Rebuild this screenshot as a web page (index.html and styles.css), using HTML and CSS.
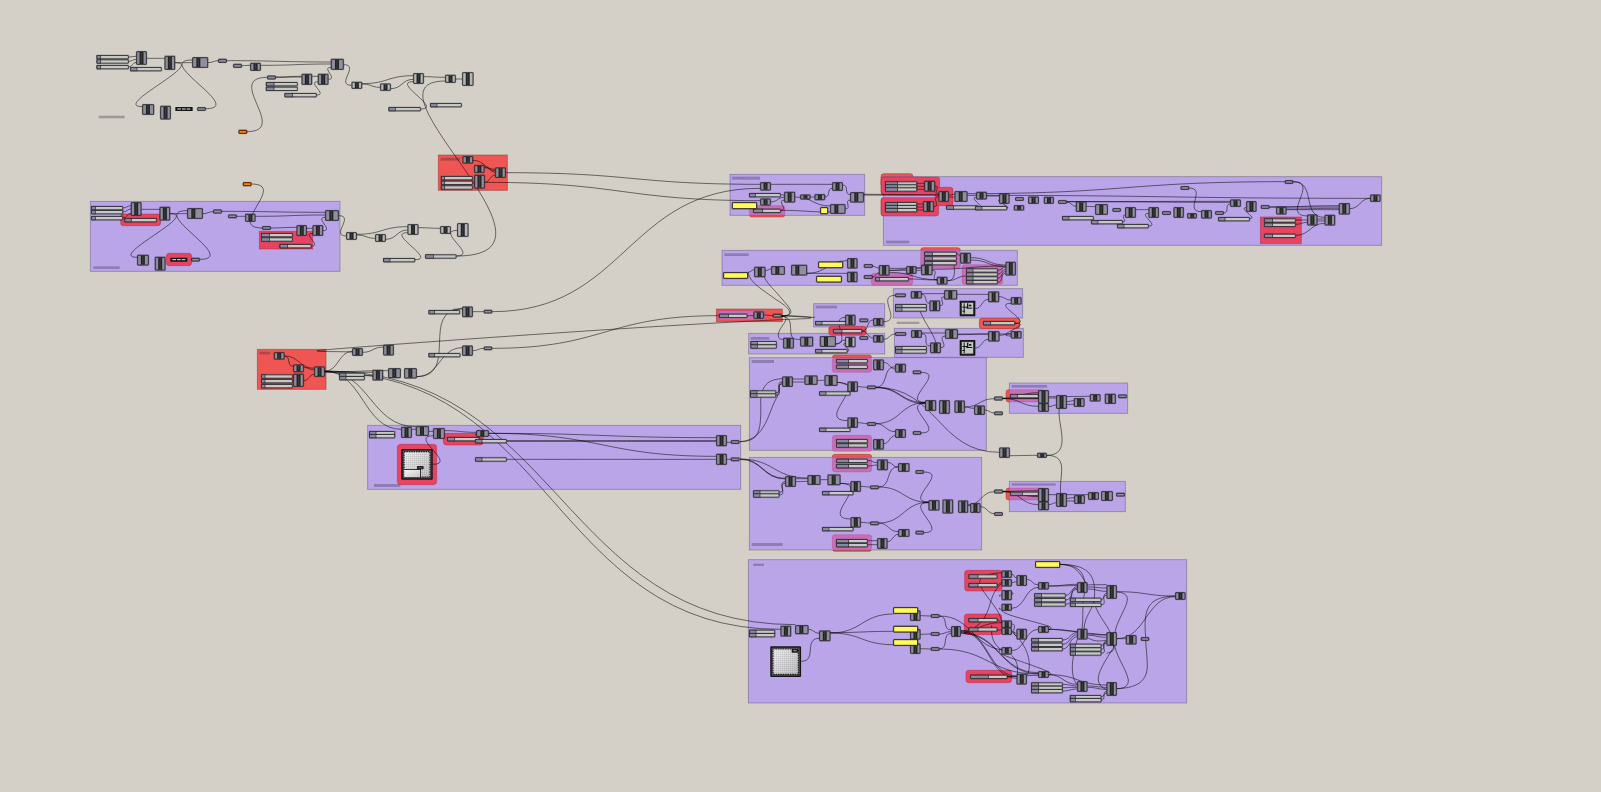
FILE: index.html
```html
<!DOCTYPE html>
<html lang="en">
<head>
    <meta charset="UTF-8">
    <meta name="viewport" content="width=device-width, initial-scale=1.0">
    <title>Definition Canvas</title>
    <link rel="stylesheet" href="styles.css">
</head>
<body>
    <svg class="canvas" viewBox="0 0 1601 792">
        <defs>
            <pattern id="grid" width="2" height="2" patternUnits="userSpaceOnUse">
                <path class="grid-line" d="M0 0H2M0 0V2"></path>
            </pattern>
            <linearGradient id="face" x1="0" y1="0" x2="1" y2="1">
                <stop offset="0" stop-color="#f4f4f6"></stop>
                <stop offset="1" stop-color="#c6c6ca"></stop>
            </linearGradient>
            <linearGradient id="capsule" x1="0" y1="0" x2="1" y2="1">
                <stop offset="0" stop-color="#8c8a98"></stop>
                <stop offset="1" stop-color="#9290a4"></stop>
            </linearGradient>
        </defs>
        <g id="groups"></g>
        <g id="wires"></g>
        <g id="parts"></g>
    </svg>
    <script src="graph.js"></script>
</body>
</html>
```
FILE: styles.css
```css
body {
    margin: 0;
    overflow: hidden;
    background-color: #d4d0c8;
    font-family: "Liberation Sans", Arial, sans-serif;
}
.canvas {
    display: block;
    width: 1601px;
    height: 792px;
}
/* groups */
.group {
    stroke: rgba(70, 60, 100, 0.42);
    stroke-width: 0.9;
}
.purple { fill: #baa5e8; }
.red { fill: #ef5552; stroke: rgba(160, 40, 40, 0.55); }
.crimson { fill: #e64461; stroke: rgba(170, 40, 70, 0.5); }
.pink { fill: #c76eb7; stroke: rgba(170, 50, 130, 0.3); }
.label { fill: rgba(40, 30, 60, 0.3); }
/* wires */
.wire {
    fill: none;
    stroke: #000;
    stroke-opacity: 0.62;
    stroke-width: 0.85;
}
.thick {
    stroke-width: 1.7;
    stroke-opacity: 0.55;
}
/* components */
.halo {
    fill: none;
    stroke: #000;
    stroke-opacity: 0.2;
    stroke-width: 2;
}
.node, .param {
    fill: url(#capsule);
    stroke: #26262a;
    stroke-width: 0.9;
}
.param { fill: #8f8d9e; }
.node.light { fill: #b7b7b9; }
.band { fill: #222424; }
.band-core { fill: #383b38; }
.track {
    fill: #c6c8c6;
    stroke: #2a2a2e;
    stroke-width: 0.85;
}
.name {
    fill: #8a889c;
    stroke: #2a2a2e;
    stroke-width: 0.7;
}
.panel {
    fill: #fffa5a;
    stroke: #26261a;
    stroke-width: 1;
}
.error {
    fill: #ff7f00;
    stroke: #5a1400;
    stroke-width: 1;
}
.dark { fill: #161616; }
.white { fill: #e8e8e8; }
.md-edge {
    fill: #66666c;
    stroke: #141416;
    stroke-width: 1.5;
}
.md-face { fill: url(#face); }
.md-grid {
    fill: url(#grid);
    stroke: #1a1a1a;
    stroke-width: 1.2;
    stroke-dasharray: 1.5 0.9;
}
.grid-line {
    fill: none;
    stroke: #000;
    stroke-opacity: 0.28;
    stroke-width: 0.5;
}
```
FILE: graph.js
```javascript
// Clusters of the definition. Positions are in thirds of a pixel from the cluster origin.
// groups: kind x y w h [radius]   nodes: x y w h [l = light]   sliders: x y w nameWidth
// params, panels: x y w h         wires: x1 y1 x2 y2 [handle]  paths: free wires
var clusters = [
  {
    at: [80, 40],
    groups: 'label 56 227 78 8',
    sliders: '50 46 96 12;50 59 96 12;50 76 96 12;151 82 94 20;558 127 95 24;558 141 95 24;614 160 96 24;926 202 96 20;1051 190 94 20',
    nodes: '169 34 31 40;254 48 31 41;337 52 47 31;511 69 31 23;753 57 38 32;665 102 31 32;714 102 31 32;815 126 31 20 l;901 131 31 21 l;1000 100 31 31 l;1096 105 31 23 l;1147 97 33 40 l;187 193 35 31;241 198 31 40',
    params: '415 57 25 11;460 72 25 11;562 107 25 11;352 202 25 10',
    errors: '476 270 25 11;489 427 25 11',
    toggles: '286 201 52 12',
    wires: '146 51 169 49;146 64 169 58;146 81 169 67;200 55 254 55;285 68 337 68;285 68 187 200;377 206 337 60;384 68 415 62;440 62 753 66;485 77 511 76;542 76 753 72;587 111 665 109;587 112 665 111;696 109 714 109;745 118 753 82;710 165 714 125;500 275 562 112;791 74 815 136;846 131 1000 107;846 132 901 142;932 146 1000 118;1031 110 1096 112;1127 117 1147 117;1022 207 1000 125'
  },
  {
    at: [80, 190],
    groups: 'purple 31 34 749 210;crimson 538 124 160 53;crimson 122 72 120 35 8;crimson 259 190 76 37 9;label 40 229 79 8',
    sliders: '34 49 95 12;34 61 95 12;34 79 95 12;134 85 96 20;544 130 94 24;544 143 94 24;599 163 95 24;910 205 95 20;1036 194 93 24',
    nodes: '153 37 31 40;239 51 31 40;322 55 46 31;496 72 30 23;736 61 40 31;650 106 30 31;698 106 31 31;799 127 31 22 l;886 133 31 22 l;983 103 32 31 l;1081 109 31 22 l;1132 100 33 40 l;172 195 34 31;225 201 31 40',
    params: '400 59 25 11;445 74 25 10;547 109 25 10;334 204 25 10',
    toggles: '271 203 51 12',
    wires: '129 54 153 47;129 66 153 57;129 84 153 70;184 58 239 58;270 71 322 71;270 71 172 202;359 208 322 62;368 71 400 65;425 64 736 67;470 79 496 79;526 79 736 75;514 -18 547 114;572 114 650 112;680 115 698 115;729 122 736 82;694 168 698 130;776 77 799 138;830 133 983 110;830 135 886 145;917 148 983 120;1015 113 1081 115;1005 209 983 128;1129 198 1132 121',
    paths: 'M1129 198C1512 198 818 -327 1096 -327'
  },
  {
    at: [240, 290],
    groups: 'red 52 178 206 120;purple 383 406 1119 192;crimson 472 463 118 121 10;crimson 610 430 120 35 9;label 58 185 33 8;label 402 582 79 9',
    sliders: '64 254 94 11;64 268 94 11;64 283 94 11;298 249 76 20;298 259 76 20;566 61 94 18;566 190 95 18;388 424 77 20;388 433 77 20;622 442 96 22;706 448 94 20;706 503 94 20',
    nodes: '102 187 31 21;160 224 31 22;160 252 31 38;223 230 31 30;337 175 31 22;430 165 31 31;398 240 31 31;445 235 37 29;493 235 37 30;667 50 31 31;667 167 31 30;484 411 31 32;528 409 38 28;580 415 34 31;709 421 37 19;1429 436 31 32;1429 492 31 32',
    params: '732 60 24 10;732 170 24 10;1473 451 25 10;1473 503 25 10',
    md: '484 477 94 92 a',
    wires: '133 198 160 229;133 198 223 235;191 232 223 240;191 272 223 253;254 244 337 184;368 187 430 171;254 244 398 247;254 246 445 242;374 257 398 257;254 244 484 418;254 244 528 410;254 243 1666 1004;254 246 1622 1018;530 260 667 173;530 260 667 57 130;638 58 667 55;698 65 732 65;698 182 732 175;756 65 1561 -305;756 175 1435 77;614 422 709 427;746 430 1429 443;746 430 1429 499;800 452 1429 452;800 454 1429 454;800 508 1429 508;578 523 580 437;515 418 528 418;566 424 580 424;1460 457 1475 457;1460 508 1475 508;718 447 709 432',
    paths: 'M337 186C300 184 200 186 240 181C300 174 1300 100 1700 86C1740 82 1690 78 1626 77'
  },
  {
    at: [420, 140],
    groups: 'red 55 45 207 106;red 988 197 107 34 8;purple 930 103 404 123;pink 988 197 107 29 8;label 62 53 58 9;label 936 110 84 9',
    sliders: '63 109 95 11;63 123 95 11;63 137 95 11;988 160 94 18;1000 207 82 28',
    nodes: '128 49 31 21;163 76 30 22;163 105 31 40;226 83 31 30;1021 127 31 24;1021 176 31 20;1093 156 32 31;1141 164 30 14;1184 163 31 17;1237 127 31 25;1291 157 40 30;1231 193 45 28',
    panels: '936 187 74 19;1201 202 22 19',
    wires: '159 61 226 88;193 83 226 92;194 80 226 97;194 127 226 105;257 98 1021 133;194 127 1021 182;1052 133 1237 133;1082 165 1093 165;1052 186 1093 172;1082 211 1093 180;1125 171 1231 198;1082 211 1231 216;1215 171 1237 145;1268 135 1291 164;1276 207 1291 180;1171 171 1184 171',
    thick: '1331 164 1560 165'
  },
  {
    at: [870, 165],
    groups: 'red 33 26 96 40 8;red 33 37 30 52 8;red 33 98 30 55 8;purple 40 35 1495 206;crimson 34 36 175 53 8;crimson 34 98 172 55 8;crimson 195 67 54 55 8;label 48 227 70 8',
    sliders: '46 50 95 37;46 59 95 37;46 68 95 37;46 112 95 37;46 121 95 37;46 130 95 37;229 122 95 22;316 124 95 20;577 154 94 20;664 166 94 20;742 178 94 20',
    nodes: '163 48 32 31;160 109 31 31;206 79 30 31;254 79 38 31;319 81 31 22;388 86 30 30;475 95 31 21;522 96 29 20;432 121 30 15;618 110 31 30;676 118 37 31;766 127 31 31',
    params: '436 97 25 10;565 106 25 10;728 130 24 10',
    wires: '141 55 163 55;141 64 163 64;141 73 163 73;141 117 160 117;141 126 160 126;141 135 160 135;191 125 206 95;195 63 206 87;236 90 254 88;236 96 254 96;292 86 1245 50;292 91 1500 100;324 127 319 97;350 93 388 93;411 129 388 105;590 111 618 124;590 110 1081 109;590 110 1081 112;649 124 676 125;758 171 766 150;797 134 836 134'
  },
  {
    at: [1130, 165],
    groups: 'crimson 391 156 123 80',
    sliders: '265 157 94 20;403 161 94 25;403 174 94 25;403 207 94 25',
    nodes: '56 127 30 31;131 127 30 31;172 145 28 15;214 136 31 24;301 104 31 21;349 109 30 31;439 126 30 22;532 149 30 32;584 150 31 31;627 115 32 33;721 89 30 21',
    params: '97 139 25 10;152 64 25 10;256 139 25 10;393 121 25 10;465 46 24 10',
    wires: '177 69 214 140;281 144 301 117;56 183 56 145;359 161 349 128;417 126 627 122;417 126 627 126;469 132 627 130;469 134 627 134;489 50 532 153;489 50 584 157;497 165 532 165;497 178 532 172;497 211 584 175;562 162 584 162;562 168 584 168;659 131 721 100'
  },
  {
    at: [700, 240],
    groups: 'red 662 23 119 40 8;purple 66 31 886 105;red 49 207 198 38;pink 55 212 140 28 6;red 387 257 111 34 8;purple 341 191 213 70;purple 146 280 408 62;crimson 387 259 111 27 8;purple 580 146 388 88;purple 583 265 387 87;red 838 235 121 31 8;pink 662 31 119 54 8;pink 786 74 122 59 8;pink 514 100 124 36 8;label 73 40 73 8;label 347 197 64 8;label 152 291 56 8;label 590 245 68 7',
    sliders: '673 36 97 24;673 50 97 24;673 64 97 24;799 86 94 20;799 98 94 20;799 110 94 20;799 121 94 20;526 112 100 12;57 222 85 28;346 244 94 20;400 268 86 26;152 304 78 20;152 314 78 20;346 328 96 20;586 193 94 20;586 203 94 20;586 319 94 20;586 329 94 20;850 244 95 22',
    nodes: '163 81 33 30;214 79 40 25;274 75 47 31;442 55 30 30;442 96 30 30;537 76 31 30;619 79 30 22;664 75 33 30;711 111 31 22;781 39 31 31;917 66 30 40;161 215 30 21;436 225 30 31;520 235 30 22;250 294 31 31;301 291 38 28;360 289 47 31;436 291 30 30 l;520 286 30 21;633 154 32 21;733 151 38 27;689 182 31 31;865 155 32 31;933 172 31 21;634 271 31 22;736 268 37 28;691 308 31 31;865 274 33 30;933 274 31 21',
    params: '492 73 26 10;492 106 26 10;219 222 25 10;479 236 25 10;479 289 25 10;586 161 31 10;586 277 32 10',
    panels: '70 97 73 18;355 65 73 18;349 108 75 18',
    boxes: '779 182 47 47;779 300 47 47',
    wires: '144 97 163 89;196 92 214 87;321 100 442 62;321 100 442 100;518 79 537 84;518 111 537 98;568 91 619 91;568 85 664 85;568 91 664 83;626 117 711 120;568 97 711 119;697 91 711 120;742 122 799 108;770 40 781 48;812 53 917 75;650 91 664 91;697 88 917 78;812 60 917 80;893 91 917 82;893 103 917 88;893 115 917 94;893 127 917 100;142 227 161 227;191 225 219 227;244 228 345 232;407 312 436 232 50;407 312 436 300;442 333 436 310;550 245 586 166 60;550 298 586 282;486 273 520 240;486 273 520 294;665 161 733 161;665 163 689 190;720 197 733 170;771 163 865 163;826 206 865 178;897 170 933 180;945 250 933 190 60;665 279 736 279;665 281 691 318;722 323 736 288;773 284 865 282;773 282 933 282;826 324 865 298;898 286 933 281;945 250 933 288 60',
    paths: 'M244 228C290 228 265 200 230 180C190 150 150 130 144 97;M244 228C300 228 260 195 240 170C215 140 200 130 192 108;M244 228C280 232 235 260 235 285C235 297 240 298 250 298;M244 228C280 232 268 260 274 285C278 300 290 298 301 298;M660 213C680 260 695 270 708 308;M742 122C765 122 765 100 762 76'
  },
  {
    at: [740, 350],
    groups: 'red 277 15 118 40 8;red 277 313 118 40 8;red 277 564 118 40 8;purple 28 23 711 278;purple 28 322 697 278;pink 277 23 118 44 8;pink 277 256 118 48 8;pink 277 322 118 44 8;pink 277 554 118 46 8;label 35 30 67 9;label 35 579 93 9',
    sliders: '289 28 94 37;289 45 94 37;238 125 93 20;238 234 93 20;31 122 77 20;31 131 77 20;289 268 94 37;289 281 94 37;289 327 94 37;289 343 94 37;247 424 93 20;247 532 93 20;40 422 78 20;40 431 78 20;289 568 94 37;289 580 94 37',
    nodes: '400 29 31 31;466 42 31 25;127 80 31 30;194 77 38 27;254 76 38 31;323 95 30 30;323 203 30 30;556 151 32 31;598 151 31 40;644 152 30 36;703 167 31 27;466 238 31 25;400 268 31 30;412 329 31 31;475 340 33 25;136 379 31 31;203 376 38 28;263 374 38 31;332 394 30 31;332 502 30 30;566 451 32 30;608 449 31 41;655 452 29 36;691 460 30 28;475 538 33 22;412 565 30 31',
    params: '382 107 25 10;382 217 25 10;519 62 24 10;519 244 24 10;391 407 25 10;391 515 25 10;527 361 24 10;527 543 24 10',
    wires: '108 128 127 95;108 136 127 102;158 87 194 87;158 96 194 96;232 91 254 91;292 97 323 103;292 97 323 212 100;353 110 382 112;353 218 382 221;407 112 466 50;431 37 466 57;407 112 556 158;407 113 556 161;407 221 556 158;407 221 466 245;431 281 466 257;543 67 556 157;543 249 556 160;674 171 763 146;674 171 703 175;734 180 763 189;407 112 778 307;0 327 136 385;0 328 136 387;0 327 203 384;118 427 136 395;118 435 136 400;167 386 203 386;167 395 203 394;241 389 263 389;301 400 332 402;301 400 332 507 95;362 409 391 411;362 517 391 519;416 411 475 350;443 337 475 352;383 331 412 338;383 348 412 345;416 411 566 457;416 519 566 457;416 519 475 545;442 575 475 553;383 572 412 572;383 584 412 584;552 366 566 456;552 548 566 458;684 465 691 468;684 465 763 425;721 470 763 491;540 158 556 158;548 457 566 457',
    paths: 'M0 275C60 275 64 240 62 150C66 100 90 88 127 86;M0 275C80 270 85 180 112 140C118 120 115 100 127 98'
  },
  {
    at: [960, 370],
    groups: 'red 138 59 60 37 8;red 138 354 60 36 8;purple 148 39 355 91;purple 148 334 348 91;pink 148 59 105 37 4;pink 148 354 105 36 4;label 155 45 106 8;label 155 340 132 7',
    sliders: '151 73 85 21;151 366 85 36',
    nodes: '235 61 31 39;235 100 31 25;289 76 31 40;342 85 31 25;390 73 31 21;435 72 32 29;118 233 31 30;232 249 28 14;235 355 31 40;235 395 31 25;289 370 31 40;343 376 31 25;385 367 31 22;424 364 34 28',
    params: '103 80 25 11;103 125 25 10;475 74 25 10;103 359 25 11;103 427 25 10;469 369 25 10',
    wires: '128 85 235 85;128 86 235 86;128 85 235 68;128 85 235 109;266 80 390 79;266 84 289 84;266 110 289 105;320 95 342 92;320 103 342 103;149 257 232 256;128 364 235 380;128 364 235 362;128 364 235 404;266 374 385 374;266 404 289 398;320 385 343 383;320 393 343 393;128 366 151 366',
    paths: 'M260 256C340 256 290 160 298 116;M260 256C330 256 296 320 302 370'
  },
  {
    at: [740, 550],
    groups: 'purple 25 29 1315 430;label 40 41 32 7',
    sliders: '28 240 77 20;28 250 77 20',
    nodes: '122 228 31 31;166 226 39 26;238 242 33 31;511 182 30 30;511 238 30 30;511 281 30 30;634 229 28 31',
    params: '573 193 25 10;573 247 25 10;573 292 25 10',
    panels: '460 172 73 18;460 228 73 18;460 268 73 18',
    md: '91 289 92 92',
    wires: '205 238 238 250;184 334 238 265;271 249 460 192;271 248 460 244;271 249 460 284;541 197 573 198;541 253 573 252;541 296 573 297;598 198 634 240 30;598 252 634 245;598 297 634 250 30;598 198 800 300;598 297 895 372'
  },
  {
    at: [950, 550],
    groups: 'crimson 44 61 112 62 8;crimson 43 192 112 62 8;crimson 48 361 137 37 8',
    sliders: '56 74 86 28;56 100 86 28;56 205 86 28;56 233 86 28;61 375 111 54;253 131 94 22;253 145 94 22;253 158 94 22;360 144 94 16;360 159 94 16;244 265 94 22;244 279 94 22;244 292 94 22;360 282 94 16;360 293 94 16;360 305 94 16;244 398 94 22;244 408 94 22;244 418 94 22;360 436 94 16;360 445 94 16',
    nodes: '155 62 30 21;155 88 30 21;155 121 30 29;155 162 30 20;200 76 30 31;265 97 31 21;382 97 30 31;470 106 30 40;676 127 30 22;155 212 30 21;155 233 30 21;200 237 30 31;265 229 31 19;382 237 30 31;470 247 30 40;528 256 31 27;155 292 30 21;200 372 30 31;265 364 31 19;382 394 30 31;470 397 30 40',
    params: '573 262 24 10',
    panels: '256 34 73 18',
    wires: '142 105 155 98;185 72 200 84;185 98 200 95;230 88 265 105;185 175 265 112;296 108 382 103;296 108 470 104;347 136 382 110;347 150 382 114;347 163 382 118;412 111 470 114;412 117 470 124;454 148 470 130;454 164 470 136;500 125 676 138;500 266 676 140;500 266 528 266;338 270 382 248;338 283 382 254;338 297 382 260;412 250 470 254;412 256 470 262;454 287 470 272;454 298 470 276;454 310 470 280;296 238 382 244;296 238 470 255;296 374 382 403;296 374 470 405;338 403 382 408;338 413 382 412;338 423 382 417;412 408 470 412;412 412 470 418;454 441 470 424;454 450 470 430;32 242 155 218;32 246 155 240;32 242 200 378;32 245 200 385;32 248 265 368;32 250 265 371;172 380 265 376;185 222 200 250;185 243 200 258;185 302 265 238;142 209 155 218;172 379 200 379',
    paths: 'M155 68C90 72 80 90 95 115C115 150 150 180 155 215;M155 100C120 130 125 165 105 200C90 230 50 245 40 252;M155 180C155 195 260 215 300 230C308 236 300 238 296 238;M155 312C165 320 280 355 300 368C306 373 300 374 296 374;M330 43C390 45 400 70 404 97;M330 43C380 45 385 65 412 104;M330 43C430 43 434 90 434 135C428 190 405 190 402 237;M404 128C394 170 402 190 396 237;M430 144C436 190 470 220 480 247;M500 126C570 130 505 190 495 247C480 280 500 285 486 300C455 350 420 400 470 419;M382 268C372 300 355 370 380 402;M470 310C510 300 480 285 495 290C500 320 530 360 535 390C536 410 520 416 500 416;M500 416C560 414 590 395 592 350C592 320 588 295 587 271;M587 262C580 180 590 140 676 138;M412 262C430 275 450 275 470 270;M125 225C120 270 140 290 155 300;M185 245C240 290 245 350 232 375;M150 306C145 298 148 295 155 300;M150 173C145 176 148 179 155 177;M185 135C192 130 190 127 185 130;M150 140C146 136 148 134 155 136;M185 316C210 340 200 365 203 380'
  }
];

var svgNS = 'http://www.w3.org/2000/svg';
var layers = {
  groups: document.getElementById('groups'),
  wires: document.getElementById('wires'),
  parts: document.getElementById('parts')
};

function add(parent, tag, cls, attrs) {
  var el = document.createElementNS(svgNS, tag);
  el.setAttribute('class', cls);
  for (var key in attrs) {
    el.setAttribute(key, attrs[key]);
  }
  parent.appendChild(el);
}

function each(list, fn) {
  if (!list) return;
  list.split(';').forEach(function (row) {
    fn(row.split(' ').map(function (v) { return isNaN(v) ? v : Number(v); }));
  });
}

clusters.forEach(function (c) {
  function px(v) { return c.at[0] + v / 3; }
  function py(v) { return c.at[1] + v / 3; }

  function rect(layer, cls, x, y, w, h, r) {
    add(layer, 'rect', cls, { x: px(x), y: py(y), width: w / 3, height: h / 3, rx: (r || 0) / 3 });
  }
  // outlined box, most of the stroke stays inside the given size
  function box(cls, x, y, w, h) {
    rect(layers.parts, 'halo', x + 1, y + 1, w - 2, h - 2, 1);
    rect(layers.parts, cls, x + 1, y + 1, w - 2, h - 2, 1);
  }
  function wire(cls) {
    return function (w) {
      var dx = w[2] - w[0];
      var dy = Math.abs(w[3] - w[1]);
      var k = w[4] || Math.max(Math.abs(dx) / 2, dy * 0.9 - Math.abs(dx) * 0.25);
      add(layers.wires, 'path', cls, {
        d: 'M' + px(w[0]) + ' ' + py(w[1]) +
           'C' + px(w[0] + k) + ' ' + py(w[1]) + ' ' + px(w[2] - k) + ' ' + py(w[3]) +
           ' ' + px(w[2]) + ' ' + py(w[3])
      });
    };
  }

  each(c.groups, function (g) {
    rect(layers.groups, g[0] === 'label' ? 'label' : 'group ' + g[0], g[1], g[2], g[3], g[4], g[5]);
  });

  each(c.wires, wire('wire'));
  each(c.thick, wire('wire thick'));
  if (c.paths) {
    c.paths.split(';').forEach(function (d) {
      add(layers.wires, 'path', 'wire', {
        d: d,
        transform: 'translate(' + c.at[0] + ' ' + c.at[1] + ') scale(0.33333)',
        'vector-effect': 'non-scaling-stroke'
      });
    });
  }

  each(c.sliders, function (s) {
    box('track', s[0], s[1] - 0.5, s[2], 12);
    rect(layers.parts, 'name', s[0] + 1, s[1] + 0.5, s[3] - 1, 10);
  });

  each(c.nodes, function (n) {
    var left = n[0] + (n[2] > 35 ? 12 : n[2] * 0.31);
    var bw = 12;
    box(n[4] ? 'node light' : 'node', n[0], n[1], n[2], n[3]);
    rect(layers.parts, 'band', left, n[1] + 2, bw, n[3] - 4);
    rect(layers.parts, 'band-core', left + 4, n[1] + 4, bw - 8, n[3] - 8);
  });

  each(c.params, function (p) { box('param', p[0], p[1], p[2], p[3]); });
  each(c.errors, function (p) { box('error', p[0], p[1], p[2], p[3]); });
  each(c.panels, function (p) { box('panel', p[0], p[1], p[2] + 1, p[3] + 1); });

  each(c.toggles, function (t) {
    rect(layers.parts, 'dark', t[0], t[1], t[2], t[3], 1);
    for (var i = 0; i < 3; i++) {
      rect(layers.parts, 'white', t[0] + 6 + i * 14, t[1] + 4.5, 11, 3);
    }
  });

  // 2D sliders
  each(c.md, function (m) {
    var x = m[0], y = m[1];
    rect(layers.parts, 'md-edge', x + 2, y + 2, m[2] - 4, m[3] - 4, 1);
    rect(layers.parts, 'md-face', x + 8, y + 8, m[2] - 16, m[3] - 16);
    rect(layers.parts, 'md-grid', x + 8, y + 8, m[2] - 16, m[3] - 16);
    if (m[4]) {
      rect(layers.parts, 'md-face', x + 9, y + 63, 48, 21);
      rect(layers.parts, 'dark', x + 9, y + 60, 50, 2.5);
      rect(layers.parts, 'dark', x + 56, y + 60, 2.5, 26);
      rect(layers.parts, 'dark', x + 47, y + 51, 20, 10, 3);
      rect(layers.parts, 'param', x + 51, y + 54, 12, 4);
    } else {
      rect(layers.parts, 'dark', x + 64, y + 8, 20, 11);
      rect(layers.parts, 'param', x + 68, y + 10, 12, 6);
    }
  });

  // graph boxes
  each(c.boxes, function (b) {
    var x = b[0], y = b[1];
    rect(layers.parts, 'dark', x, y, b[2], b[3], 2);
    rect(layers.parts, 'track', x + 5, y + 5, 37, 37);
    rect(layers.parts, 'dark', x + 12, y + 8, 3, 31);
    rect(layers.parts, 'dark', x + 8, y + 18, 14, 3);
    rect(layers.parts, 'dark', x + 22, y + 8, 4, 14);
    rect(layers.parts, 'dark', x + 20, y + 21, 18, 3);
    rect(layers.parts, 'dark', x + 28, y + 12, 7, 5);
    rect(layers.parts, 'dark', x + 8, y + 30, 8, 3);
  });
});
```
